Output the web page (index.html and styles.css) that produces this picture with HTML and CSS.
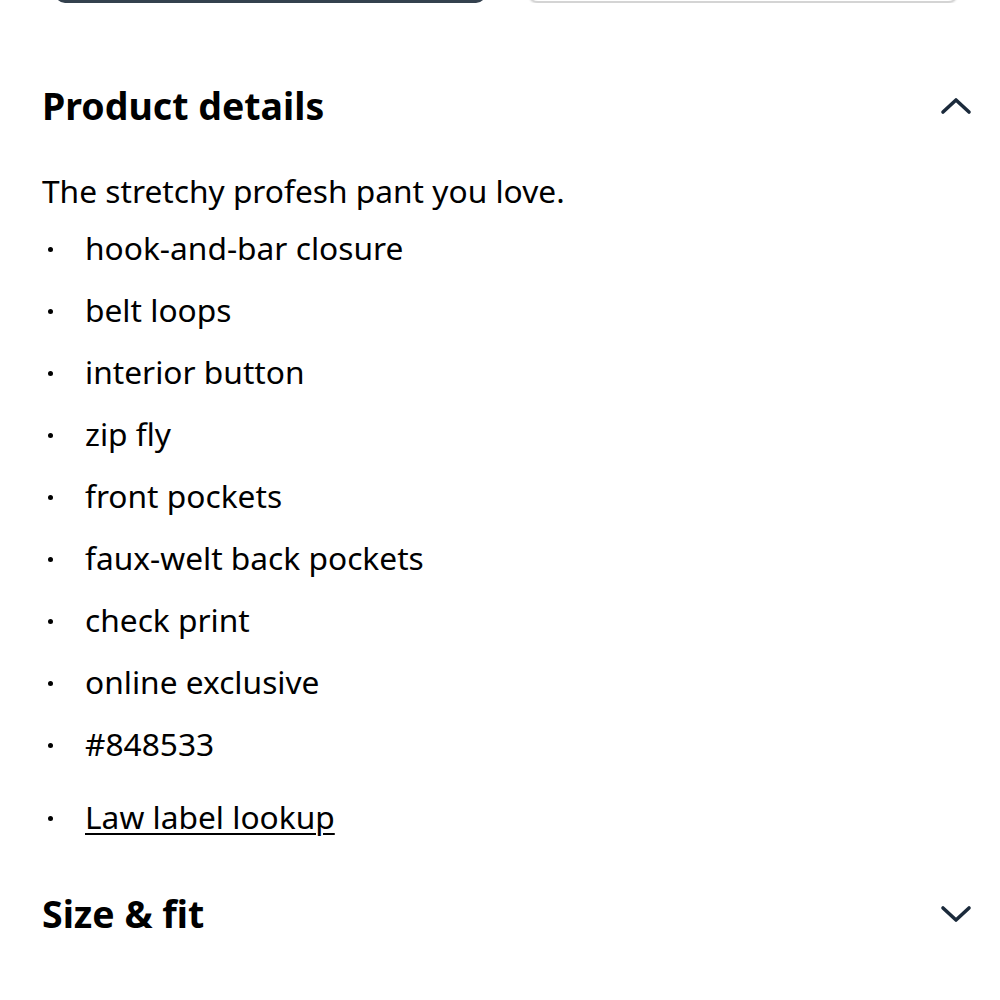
FILE: index.html
```html
<!DOCTYPE html>
<html>
<head>
<meta charset="utf-8">
<link rel="stylesheet" href="styles.css">
</head>
<body>
<div class="btn-row">
  <div class="btn btn-dark"></div>
  <div class="btn btn-light"></div>
</div>
<section class="acc">
  <div class="acc-head acc-head-first">
    <h2 class="acc-title">Product details</h2>
    <svg class="chev" width="32" height="18" viewBox="0 0 32 18"><path d="M3 15 L16 3 L29 15" fill="none" stroke="#1b2a3b" stroke-width="3.6" stroke-linecap="round" stroke-linejoin="round"/></svg>
  </div>
  <p class="desc">The stretchy profesh pant you love.</p>
  <ul class="bullets">
    <li>hook-and-bar closure</li>
    <li>belt loops</li>
    <li>interior button</li>
    <li>zip fly</li>
    <li>front pockets</li>
    <li>faux-welt back pockets</li>
    <li>check print</li>
    <li>online exclusive</li>
    <li>#848533</li>
    <li class="law"><a href="#">Law label lookup</a></li>
  </ul>
</section>
<section class="acc">
  <div class="acc-head acc-head-next">
    <h2 class="acc-title">Size &amp; fit</h2>
    <svg class="chev" width="32" height="18" viewBox="0 0 32 18"><path d="M3 3 L16 15 L29 3" fill="none" stroke="#1b2a3b" stroke-width="3.6" stroke-linecap="round" stroke-linejoin="round"/></svg>
  </div>
</section>
</body>
</html>
```
FILE: styles.css
```css
html, body {
  margin: 0;
  padding: 0;
  background: #fff;
}
body {
  font-family: "Noto Sans", "Open Sans", sans-serif;
  color: #000;
}
.btn-row {
  display: flex;
  align-items: flex-end;
  gap: 42px;
  height: 3px;
  overflow: hidden;
  padding: 0 42px 0 55px;
}
.btn {
  flex: 1;
  height: 40px;
  flex-shrink: 0;
  border-radius: 0 0 10px 10px;
}
.btn-dark {
  background: #34414e;
}
.btn-light {
  background: #fff;
  border-bottom: 2px solid #d4d4d4;
  box-shadow: 0 1px 2px rgba(0,0,0,0.15);
}
.acc {
  padding: 0 28px 0 42px;
}
.acc-head {
  display: flex;
  justify-content: space-between;
  align-items: center;
  height: 52px;
}
.acc-head-first {
  margin-top: 77px;
}
.acc-head-next {
  margin-top: 40px;
}
.acc-title {
  margin: 0;
  font-size: 37.5px;
  font-weight: 700;
  line-height: 52px;
}
.chev {
  display: block;
}
.desc {
  margin: 39px 0 0;
  font-size: 31.7px;
  line-height: 40px;
}
.bullets {
  list-style: none;
  margin: 6px 0 0;
  padding: 0;
}
.bullets li {
  position: relative;
  padding-left: 43px;
  font-size: 31.7px;
  line-height: 62px;
}
.bullets li::before {
  content: "";
  position: absolute;
  left: 6px;
  top: 30px;
  width: 5px;
  height: 5px;
  border-radius: 50%;
  background: #000;
}
.bullets li.law {
  margin-top: 11px;
}
.bullets a {
  color: #000;
  text-decoration: underline;
  text-underline-offset: 4px;
  text-decoration-thickness: 2px;
}
```
